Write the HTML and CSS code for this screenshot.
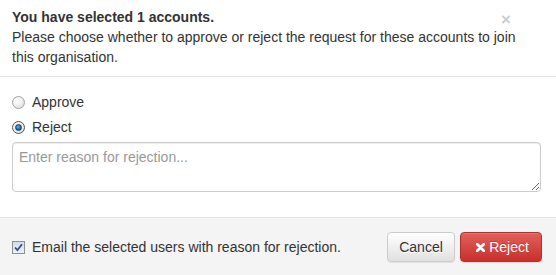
FILE: index.html
```
<!DOCTYPE html>
<html>
<head>
<meta charset="utf-8">
<link rel="stylesheet" href="styles.css">
</head>
<body>
<div class="modal">
  <div class="modal-header">
    <button class="close" type="button">&times;</button>
    <div class="header-text">
      <div class="title">You have selected 1 accounts.</div>
      <div class="desc">Please choose whether to approve or reject the request for these accounts to join this organisation.</div>
    </div>
  </div>
  <div class="modal-body">
    <label class="radio">
      <span class="radio-mark"></span>
      <span>Approve</span>
    </label>
    <label class="radio">
      <span class="radio-mark checked"><span class="dot"></span></span>
      <span>Reject</span>
    </label>
    <textarea class="reason" placeholder="Enter reason for rejection..."></textarea>
  </div>
  <div class="modal-footer">
    <label class="check">
      <span class="check-mark">
        <svg width="9" height="9" viewBox="0 0 9 9"><path d="M1 4.5 L3.4 7.2 L8 1.2" fill="none" stroke="#2c4c9a" stroke-width="1.8" stroke-linejoin="miter"/></svg>
      </span>
      <span>Email the selected users with reason for rejection.</span>
    </label>
    <div class="buttons">
      <button class="btn btn-default" type="button">Cancel</button>
      <button class="btn btn-danger" type="button"><svg class="x-icon" width="9" height="9" viewBox="0 0 9 9"><path d="M1.3 1.3 L7.7 7.7 M7.7 1.3 L1.3 7.7" stroke="#fff" stroke-width="2.7" stroke-linecap="round"/></svg>Reject</button>
    </div>
  </div>
</div>
</body>
</html>
```
FILE: styles.css
```
* { box-sizing: border-box; }
html, body { margin: 0; padding: 0; background: #fff; }
body {
  font-family: "Liberation Sans", Arial, sans-serif;
  font-size: 14px;
  line-height: 20px;
  color: #333;
}
.modal { width: 556px; }
.modal-header {
  position: relative;
  padding: 7px 30px 9px 12px;
  border-bottom: 1px solid #e5e5e5;
}
.title { font-weight: bold; }
.close {
  position: absolute;
  top: 11px;
  right: 45px;
  padding: 0;
  margin: 0;
  border: 0;
  background: transparent;
  font-family: "Liberation Sans", Arial, sans-serif;
  font-size: 17px;
  font-weight: bold;
  line-height: 17px;
  color: #000;
  opacity: 0.2;
}
.modal-body {
  padding: 15px 15px 25px 12px;
  display: flex;
  flex-direction: column;
  gap: 5px;
}
.radio {
  display: flex;
  align-items: center;
  height: 20px;
  gap: 7px;
}
.radio-mark {
  width: 13px;
  height: 13px;
  border-radius: 50%;
  border: 1px solid #a4a4a4;
  background: radial-gradient(circle at 40% 35%, #ffffff 0%, #f0f0f0 45%, #d2d2d2 100%);
  display: flex;
  align-items: center;
  justify-content: center;
}
.radio-mark.checked { border-color: #555; }
.dot {
  width: 7px;
  height: 7px;
  border-radius: 50%;
  background: radial-gradient(circle at 40% 35%, #5ab4f0 0%, #1c6fb0 55%, #0d3f6e 100%);
  border: 1px solid #1a3d5c;
}
.reason {
  display: block;
  width: 529px;
  height: 50px;
  padding: 4px 6px;
  border: 1px solid #ccc;
  border-radius: 4px;
  box-shadow: inset 0 1px 1px rgba(0,0,0,0.075);
  font-family: "Liberation Sans", Arial, sans-serif;
  font-size: 14px;
  line-height: 20px;
  color: #555;
  resize: vertical;
}
.reason::placeholder { color: #999; }
.modal-footer {
  background: #f4f4f4;
  border-top: 1px solid #e5e5e5;
  padding: 14px 14px 13px 12px;
  display: flex;
  align-items: center;
  justify-content: space-between;
}
.check {
  display: flex;
  align-items: center;
  gap: 7px;
}
.check-mark {
  width: 13px;
  height: 13px;
  border: 1px solid #8e8f8f;
  background: linear-gradient(to bottom, #d6dcec, #eef1f8);
  display: flex;
  align-items: center;
  justify-content: center;
}
.buttons { display: flex; gap: 5px; }
.btn {
  font-family: "Liberation Sans", Arial, sans-serif;
  font-size: 14px;
  line-height: 20px;
  height: 30px;
  padding: 4px 0;
  border-radius: 4px;
  border: 1px solid #ccc;
  margin: 0;
  display: flex;
  align-items: center;
  justify-content: center;
}
.btn-default {
  width: 68px;
  color: #333;
  background: linear-gradient(to bottom, #fff 0%, #e0e0e0 100%);
  border-color: #ccc;
  text-shadow: 0 1px 0 #fff;
  box-shadow: inset 0 1px 0 rgba(255,255,255,0.15), 0 1px 1px rgba(0,0,0,0.075);
}
.btn-danger {
  width: 82px;
  color: #fff;
  background: linear-gradient(to bottom, #e0605c 0%, #c9302c 100%);
  border-color: #b92c28;
  text-shadow: 0 -1px 0 rgba(0,0,0,0.2);
  box-shadow: inset 0 1px 0 rgba(255,255,255,0.15), 0 1px 1px rgba(0,0,0,0.075);
  padding-left: 3px;
}
.x-icon { margin-right: 4px; margin-top: 1px; }
```
